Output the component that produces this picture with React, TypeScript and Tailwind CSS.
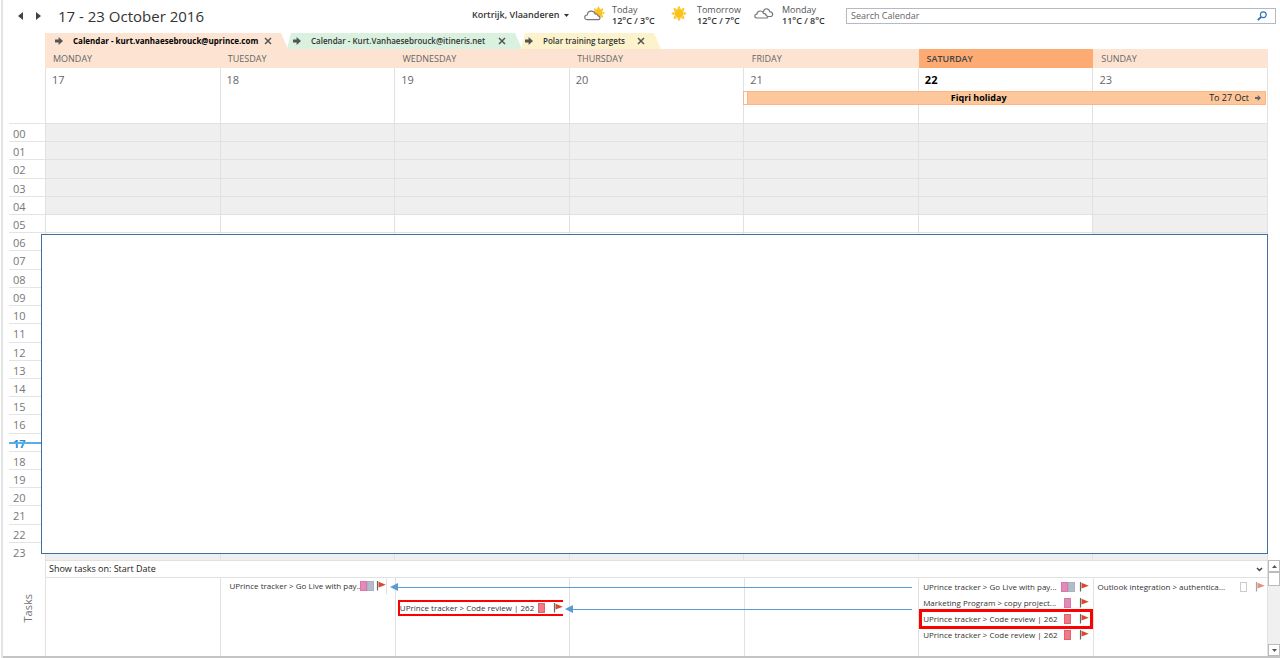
import clsx from "clsx";

const days = [
  { name: "MONDAY", date: 17 },
  { name: "TUESDAY", date: 18 },
  { name: "WEDNESDAY", date: 19 },
  { name: "THURSDAY", date: 20 },
  { name: "FRIDAY", date: 21 },
  { name: "SATURDAY", date: 22, today: true },
  { name: "SUNDAY", date: 23 },
];

const hours = Array.from({ length: 24 }, (_, i) => String(i).padStart(2, "0"));

const CURRENT_HOUR = 17;

function RightArrow({ className }: { className?: string }) {
  return (
    <svg viewBox="0 0 8 8" className={clsx("shrink-0", className)} fill="currentColor" aria-hidden="true">
      <path d="M0 2.6h3.6V0L8 4 3.6 8V5.4H0z" />
    </svg>
  );
}

function CloseIcon() {
  return (
    <svg viewBox="0 0 8 8" className="size-2" stroke="#555" strokeWidth="1.5" aria-hidden="true">
      <path d="M1 1l6 6M7 1L1 7" />
    </svg>
  );
}

const sunRays = [0, 45, 90, 135, 180, 225, 270, 315];

function Sun() {
  return (
    <g fill="#fbc21c">
      <circle r="4.6" />
      {sunRays.map((a) => (
        <path key={a} d="M-1.8 -4.8L0 -7.8L1.8 -4.8z" transform={`rotate(${a})`} />
      ))}
    </g>
  );
}

function SunnyIcon() {
  return (
    <svg viewBox="0 0 22 16" className="h-4 w-[22px] shrink-0" aria-hidden="true">
      <g transform="translate(10 7.5)"><Sun /></g>
    </svg>
  );
}

function PartlyCloudyIcon() {
  return (
    <svg viewBox="0 0 22 16" className="h-4 w-[22px] shrink-0" aria-hidden="true">
      <g transform="translate(14.5 7) scale(.85)"><Sun /></g>
      <path
        d="M3.4 13.6C1.4 13.6.7 12.4.7 11.3c0-1.5 1.2-2.3 2.5-2.3C3.5 6.6 5 5.1 7.3 5.1c1.9 0 3.3 1 3.8 2.8 2 0 2.7 1 3 1.900 1.300.2 1.900 1 1.900 1.900 0 1.100-.8 1.900-2 1.900z"
        fill="#fff"
        stroke="#777"
        strokeWidth="1.2"
      />
    </svg>
  );
}

function CloudyIcon() {
  return (
    <svg viewBox="0 0 22 16" className="h-4 w-[22px] shrink-0" fill="#fff" stroke="#777" strokeWidth="1.2" aria-hidden="true">
      <path d="M7 10.5C6.5 7.5 8 6 9.5 5.6 10 3.5 11.5 2.6 13 2.8c1.5.2 2.5 1.200 2.800 2.800 1.700.2 2.700 1.200 2.900 2.500.1 1.400-.9 2.400-2.500 2.400z" />
      <path d="M3 12C1.500 12 .8 11.100.8 10.100c0-1.200 1-1.900 2-1.900.3-2 1.600-3.200 3.500-3.200 1.600 0 2.800.9 3.200 2.400 1.700.1 2.600 1 2.700 2.200 1 .2 1.500.7 1.500 1.300 0 .7-.6 1.100-1.500 1.100z" />
    </svg>
  );
}

const forecast = [
  { day: "Today", temp: "12°C / 3°C", icon: <PartlyCloudyIcon /> },
  { day: "Tomorrow", temp: "12°C / 7°C", icon: <SunnyIcon /> },
  { day: "Monday", temp: "11°C / 8°C", icon: <CloudyIcon /> },
];

function Header() {
  return (
    <header className="flex h-[33px] items-start">
      <div className="flex items-center pt-1">
        <button aria-label="Previous week" className="ml-2 flex size-[18px] items-center justify-center">
          <svg viewBox="0 0 5 8" className="h-2 w-[5px]" fill="#444"><path d="M5 0v8L0 4z" /></svg>
        </button>
        <button aria-label="Next week" className="flex size-[18px] items-center justify-center">
          <svg viewBox="0 0 5 8" className="h-2 w-[5px]" fill="#444"><path d="M0 0v8l5-4z" /></svg>
        </button>
        <h1 className="ml-[11px] text-[15px] leading-6 text-[#333]">17 - 23 October 2016</h1>
      </div>

      <div className="mr-[15px] ml-auto flex items-center pt-[7px]">
        <select aria-label="Weather location" className="w-[90px] appearance-none text-[9px] leading-4 font-semibold text-[#333]">
          <option>Kortrijk, Vlaanderen</option>
        </select>
        <svg viewBox="0 0 5 3" className="ml-0.5 h-[3px] w-[5px]" fill="#333" aria-hidden="true"><path d="M0 0h5L2.500 3z" /></svg>
      </div>

      <div className="flex pt-1">
        {forecast.map((f) => (
          <div key={f.day} className="flex w-[85px] gap-1.5 last:w-[92px]">
            <div className="pt-0.5">{f.icon}</div>
            <div className="text-[9px] leading-[11px] whitespace-nowrap text-[#555]">
              <p>{f.day}</p>
              <p className="font-semibold text-[#333]">{f.temp}</p>
            </div>
          </div>
        ))}
      </div>

      <div className="mt-2 mr-1 flex h-4 w-[430px] items-center border border-[#b4bac4] pr-2">
        <input
          type="text"
          aria-label="Search Calendar"
          placeholder="Search Calendar"
          className="min-w-0 flex-1 pl-1 text-[9px] leading-3 outline-none placeholder:text-[#666]"
        />
        <button aria-label="Search">
          <svg viewBox="0 0 10 10" className="size-2.5" fill="none" stroke="#2f6fb5" aria-hidden="true">
            <circle cx="6.3" cy="3.7" r="2.9" strokeWidth="1.2" />
            <path d="M4.2 5.9L.8 9.2" strokeWidth="1.8" />
          </svg>
        </button>
      </div>
    </header>
  );
}

function CalendarTab({ title, className }: { title: string; className: string }) {
  return (
    <div className={clsx("flex h-4 items-center text-[8px] leading-4 whitespace-nowrap", className)}>
      <RightArrow className="mr-2.5 size-2 text-[#555]" />
      <span>{title}</span>
      <button aria-label={`Close ${title}`} className="ml-auto"><CloseIcon /></button>
    </div>
  );
}

function Tabs() {
  return (
    <div className="flex pl-[42px]">
      <CalendarTab
        title="Calendar - kurt.vanhaesebrouck@uprince.com"
        className="w-[243px] bg-[#fde4d2] pr-4 pl-2.5 font-bold text-black [clip-path:polygon(0_0,calc(100%-7px)_0,100%_100%,0_100%)]"
      />
      <CalendarTab
        title="Calendar - Kurt.Vanhaesebrouck@itineris.net"
        className="-ml-px w-[235px] bg-[#d9f1de] pr-4 pl-1.5 font-semibold text-[#333] [clip-path:polygon(4px_0,calc(100%-7px)_0,100%_100%,0_100%)]"
      />
      <CalendarTab
        title="Polar training targets"
        className="-ml-px w-[140px] bg-[#fcf3cd] pr-4 pl-1 font-semibold text-[#333] [clip-path:polygon(4px_0,calc(100%-7px)_0,100%_100%,0_100%)]"
      />
    </div>
  );
}

function DayHeaders() {
  return (
    <div className="mr-3 ml-[42px] grid h-[19px] grid-cols-7 text-[9px] leading-[19px] text-[#666]">
      {days.map((d) => (
        <div key={d.name} className={clsx("pl-2", d.today ? "bg-[#fdab73] font-semibold text-[#444]" : "bg-[#fde4d2]")}>
          {d.name}
        </div>
      ))}
    </div>
  );
}

const dayColumns = ["col-start-1", "col-start-2", "col-start-3", "col-start-4", "col-start-5", "col-start-6", "col-start-7"];

function AllDay() {
  return (
    <div className="mr-3 ml-[42px] grid grid-cols-7 grid-rows-[23px_14px_18px] border-r border-[#e1e1e1]">
      {days.map((d, i) => (
        <div
          key={d.date}
          className={clsx(
            "row-span-3 row-start-1 border-l border-[#e1e1e1] pl-1.5 text-[11px] leading-6",
            dayColumns[i],
            d.today ? "font-bold text-black" : "text-[#666]"
          )}
        >
          {d.date}
        </div>
      ))}
      <div className="z-10 col-span-3 col-start-5 row-start-2 mr-px flex items-center border border-[#fbb684] bg-[#fdc79c] text-[9px] leading-3 text-[#222]">
        <span className="h-3 w-1 border-r border-[#fbb684] bg-white" />
        <span className="flex-1 text-center font-bold text-black">Fiqri holiday</span>
        <span>To 27 Oct</span>
        <RightArrow className="mr-1 ml-1.5 size-1.5 text-[#666]" />
      </div>
    </div>
  );
}

// hours outside of the working day are shaded
const isShaded = (hour: number, day: number) => hour < 5 || hour > 19 || day === 6;

function HourGrid() {
  return (
    <div className="relative">
      <div className="mr-3 grid h-[437px] grid-cols-[42px_repeat(7,1fr)] grid-rows-[repeat(24,minmax(0,1fr))] border-r border-[#e1e1e1]">
        {hours.map((h, hour) => (
          <div key={h} className="contents">
            <div
              className={clsx(
                "relative ml-1.5 border-t border-[#e4e4e4] pl-1 text-[11px] leading-5",
                hour === CURRENT_HOUR ? "font-bold text-[#2a8dd4]" : "text-[#777]"
              )}
            >
              {h}
              {hour === CURRENT_HOUR && <span className="absolute inset-x-0 top-2 h-0.5 bg-[#5aaee4]" />}
            </div>
            {days.map((d, i) => (
              <div
                key={d.date}
                className={clsx("border-t border-l border-[#e1e1e1]", isShaded(hour, i) && "bg-[#efefef]")}
              />
            ))}
          </div>
        ))}
      </div>
      {/* blank panel laid over the appointments */}
      <div className="absolute top-[111px] right-3 bottom-1.5 left-[38px] border border-[#3f6f9f] bg-white" />
    </div>
  );
}

function Flag({ faded }: { faded?: boolean }) {
  return (
    <svg viewBox="0 0 10 10" className={clsx("h-2.5 w-2.5 shrink-0", faded && "opacity-60")} aria-hidden="true">
      <path d="M1.5 0v9.5" stroke="#666" strokeWidth="1.2" />
      <path d="M2.5 .7L9.800 3.700 2.500 6.500z" fill="#d9482b" />
    </svg>
  );
}

type TaskProps = { title: string; tags: string[]; faded?: boolean; className?: string };

function Task({ title, tags, faded, className }: TaskProps) {
  return (
    <div className={clsx("flex h-4 items-center leading-4 whitespace-nowrap text-[#333]", className)}>
      <span className="min-w-0">{title}</span>
      <span className="ml-auto flex">
        {tags.map((t) => (
          <span key={t} className={clsx("h-2.5 w-[7px] border", t)} />
        ))}
      </span>
      <Flag faded={faded} />
    </div>
  );
}

const PINK = "border-[#d678a8] bg-[#e48ab8]";
const GREY = "border-[#a8b2c2] bg-[#b4bccb]";
const RED = "border-[#e0646f] bg-[#f07a85]";
const NONE = "border-[#ccc] bg-white";

function MoveArrow({ className }: { className: string }) {
  return (
    <div className={clsx("absolute flex h-2 items-center", className)}>
      <svg viewBox="0 0 8 8" className="size-2" fill="#5b9bd5" aria-hidden="true"><path d="M8 0v8L0 4z" /></svg>
      <span className="h-px flex-1 bg-[#5b9bd5]" />
    </div>
  );
}

function TaskPane() {
  return (
    <section className="flex border-b-2 border-[#c4c4c4]">
      <div className="flex w-[42px] items-center justify-center">
        <h2 className="rotate-180 pr-2 text-[11px] leading-4 text-[#777] [writing-mode:vertical-rl]">Tasks</h2>
      </div>
      <div className="min-w-0 flex-1 border-x border-t border-[#e1e1e1]">
        <div className="flex h-4 items-center justify-between pr-1 pl-[3px] text-[9px] leading-4 text-[#222]">
          <span>Show tasks on: Start Date</span>
          <button aria-label="Collapse tasks">
            <svg viewBox="0 0 7 5" className="h-[5px] w-[7px]" fill="none" stroke="#444" strokeWidth="1.5"><path d="M1 1l2.500 2.500L6 1" /></svg>
          </button>
        </div>
        <div className="relative grid h-[79px] grid-cols-7 border-t border-[#e1e1e1] text-[8px]">
          <div />
          <div className="border-l border-[#e1e1e1]">
            <Task title="UPrince tracker > Go Live with pay..." tags={[PINK, GREY]} className="mr-2 ml-2 gap-0.5 border-r border-[#e1e1e1]" />
          </div>
          <div className="border-l border-[#e1e1e1] pt-[22px]">
            <Task title="UPrince tracker > Code review | 262" tags={[RED]} className="mr-1.5 ml-0.5 gap-2 border-y-2 border-l-2 border-[#f00]" />
          </div>
          <div className="border-l border-[#e1e1e1]" />
          <div className="border-l border-[#e1e1e1]" />
          <div className="border-l border-[#e1e1e1] px-0.5 pt-px">
            <Task title="UPrince tracker > Go Live with pay..." tags={[PINK, GREY]} className="gap-1 px-0.5" />
            <Task title="Marketing Program > copy project..." tags={[PINK]} className="gap-2 px-0.5" />
            <Task title="UPrince tracker > Code review | 262" tags={[RED]} className="relative z-10 gap-2 px-0.5 outline-3 -outline-offset-1 outline-[#f00]" />
            <Task title="UPrince tracker > Code review | 262" tags={[RED]} className="gap-2 px-0.5" />
          </div>
          <div className="border-l border-[#e1e1e1] px-0.5 pt-px">
            <Task title="Outlook integration > authentica..." tags={[NONE]} faded className="gap-2 pl-0.5" />
          </div>
          <MoveArrow className="top-[5px] right-[29.1%] left-[28.2%]" />
          <MoveArrow className="top-[27px] right-[29.1%] left-[42.5%]" />
        </div>
      </div>
      <div className="flex w-3 flex-col bg-[#f0f0f0]">
        <button aria-label="Scroll up" className="flex h-3 items-center justify-center border border-[#bbb] bg-white">
          <svg viewBox="0 0 5 3" className="h-[3px] w-[5px]" fill="#555"><path d="M0 3h5L2.500 0z" /></svg>
        </button>
        <span className="h-3.5 border border-[#bbb] bg-white" />
        <button aria-label="Scroll down" className="mt-auto flex h-3 items-center justify-center border border-[#bbb] bg-white">
          <svg viewBox="0 0 5 3" className="h-[3px] w-[5px]" fill="#555"><path d="M0 0h5L2.500 3z" /></svg>
        </button>
      </div>
    </section>
  );
}

export default function App() {
  return (
    <main className="ml-px border-l-2 border-[#e4e4e4] bg-white font-['Open_Sans','Noto_Sans',sans-serif]">
      <Header />
      <Tabs />
      <DayHeaders />
      <AllDay />
      <HourGrid />
      <TaskPane />
    </main>
  );
}
